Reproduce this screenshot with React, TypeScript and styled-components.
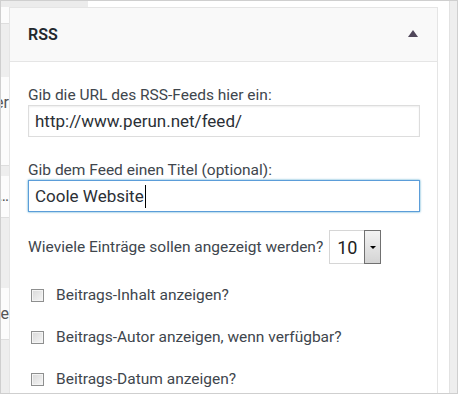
import styled, { createGlobalStyle } from "styled-components";

const GlobalStyle = createGlobalStyle`
  html, body {
    margin: 0;
    padding: 0;
    background: #ffffff;
  }

  body {
    font-family: Roboto, "Open Sans", sans-serif;
    color: #444;
  }
`;

const backdrop = [
  { height: 17, white: true, text: "", top: 0 },
  { height: 53, white: false, text: "", top: 0 },
  { height: 89, white: true, text: "er", top: 16 },
  { height: 10, white: false, text: "", top: 0 },
  { height: 42, white: true, text: "…", top: 10 },
  { height: 70, white: false, text: "", top: 0 },
  { height: 52, white: true, text: "e", top: 16 },
  { height: 60, white: false, text: "", top: 0 },
];

const options = [
  "Beitrags-Inhalt anzeigen?",
  "Beitrags-Autor anzeigen, wenn verfügbar?",
  "Beitrags-Datum anzeigen?",
];

function Checkbox() {
  return <Box />;
}

function App() {
  return (
    <>
      <GlobalStyle />
      <Frame>
        <TopStrip>
          <TopGray />
        </TopStrip>
        <RightRail />

        <LeftColumn>
          {backdrop.map((strip, i) => (
            <Strip key={i} $height={strip.height} $white={strip.white} $top={strip.top}>
              {strip.text}
            </Strip>
          ))}
        </LeftColumn>

        <Widget>
          <Header>
            <Title>RSS</Title>
            <Toggle />
          </Header>

          <Body>
            <Field $after={23}>
              <Label>Gib die URL des RSS-Feeds hier ein:</Label>
              <TextBox>http://www.perun.net/feed/</TextBox>
            </Field>

            <Field $after={18}>
              <Label>Gib dem Feed einen Titel (optional):</Label>
              <TextBox $focused>
                Coole Website
                <Caret />
              </TextBox>
            </Field>

            <CountRow>
              <Label>Wieviele Einträge sollen angezeigt werden?</Label>
              <Select>
                <SelectValue>10</SelectValue>
                <SelectButton />
              </Select>
            </CountRow>

            <Options>
              {options.map((text) => (
                <OptionRow key={text}>
                  <Checkbox />
                  <span>{text}</span>
                </OptionRow>
              ))}
            </Options>
          </Body>
        </Widget>

        <RightGap />
      </Frame>
    </>
  );
}

const Frame = styled.div`
  box-sizing: border-box;
  width: 458px;
  height: 394px;
  border: 1px solid #cfcfcf;
  overflow: hidden;

  display: grid;
  grid-template-columns: 8px 429px 11px 8px;
  grid-template-rows: 6px 1fr;

  background: #f1f1f1;
`;

const TopStrip = styled.div`
  grid-column: 1 / 4;
  grid-row: 1;

  display: flex;
  background: #ffffff;
`;

const TopGray = styled.div`
  width: 87px;
  background: #ececec;
`;

const RightRail = styled.div`
  grid-column: 4;
  grid-row: 1 / 3;

  background: #eeeeee;
  border-left: 1px solid #e2e2e2;
`;

const RightGap = styled.div`
  grid-column: 3;
  grid-row: 2;

  background: #ffffff;
`;

const LeftColumn = styled.div`
  grid-column: 1;
  grid-row: 2;

  display: flex;
  flex-direction: column;
  overflow: hidden;
`;

const Strip = styled.div<{ $height: number; $white: boolean; $top: number }>`
  flex: none;
  box-sizing: border-box;
  height: ${(p) => p.$height}px;
  padding-top: ${(p) => p.$top}px;

  display: flex;
  justify-content: flex-end;

  background: ${(p) => (p.$white ? "#fcfcfc" : "#eeeeee")};
  border-bottom: 1px solid ${(p) => (p.$white ? "#dedede" : "#eeeeee")};

  font-size: 16px;
  line-height: 20px;
  color: #555;
  white-space: nowrap;
`;

const Widget = styled.section`
  grid-column: 2;
  grid-row: 2;

  box-sizing: border-box;
  border: 1px solid #e5e5e5;
  border-bottom: none;
  background: #ffffff;
`;

const Header = styled.header`
  box-sizing: border-box;
  height: 54px;
  padding: 0 19px 0 18px;

  display: flex;
  align-items: center;
  justify-content: space-between;

  background: #f9f9f9;
  border-bottom: 1px solid #e5e5e5;
`;

const Title = styled.h3`
  margin: 0;

  font-size: 16px;
  font-weight: 600;
  color: #23282d;
`;

const Toggle = styled.span`
  width: 0;
  height: 0;
  margin-top: -2px;

  border-left: 5px solid transparent;
  border-right: 5px solid transparent;
  border-bottom: 7px solid #50475a;
`;

const Body = styled.div`
  padding: 23px 17px 0 18px;

  display: flex;
  flex-direction: column;
`;

const Field = styled.div<{ $after: number }>`
  display: flex;
  flex-direction: column;
  margin-bottom: ${(p) => p.$after}px;
`;

const Label = styled.label`
  font-size: 15.5px;
  line-height: 20px;
  color: #40464d;
`;

const TextBox = styled.div<{ $focused?: boolean }>`
  box-sizing: border-box;
  height: 32px;
  padding: 0 6px;

  display: flex;
  align-items: center;

  border: 1px solid ${(p) => (p.$focused ? "#5b9dd9" : "#dddddd")};
  box-shadow: ${(p) =>
    p.$focused
      ? "0 0 2px rgba(30, 140, 190, 0.8)"
      : "inset 0 1px 2px rgba(0, 0, 0, 0.07)"};
  background: #ffffff;

  font-size: 17px;
  color: #2b3036;
`;

const Caret = styled.span`
  width: 1px;
  height: 23px;
  margin-left: 1px;
  background: #000000;
`;

const CountRow = styled.div`
  display: flex;
  align-items: center;
  gap: 6px;
`;

const Select = styled.div`
  box-sizing: border-box;
  width: 52px;
  height: 34px;

  display: flex;

  border: 1px solid #d6d6d6;
  background: #ffffff;
`;

const SelectValue = styled.span`
  flex: 1;
  padding-left: 7px;

  display: flex;
  align-items: center;

  font-size: 18px;
  color: #222;
`;

const SelectButton = styled.span`
  box-sizing: border-box;
  width: 17px;
  margin: -1px -1px -1px 0;

  display: flex;
  align-items: center;
  justify-content: center;

  border: 1px solid #707070;
  background: linear-gradient(#f2f2f2, #d4d4d4);

  &::after {
    content: "";
    width: 0;
    height: 0;
    border-left: 3px solid transparent;
    border-right: 3px solid transparent;
    border-top: 3px solid #000000;
  }
`;

const Options = styled.div`
  margin-top: 21px;

  display: flex;
  flex-direction: column;
  gap: 22px;
`;

const OptionRow = styled.label`
  display: flex;
  align-items: center;
  gap: 12px;
  padding-left: 3px;

  font-size: 15.5px;
  line-height: 20px;
  color: #40464d;
`;

const Box = styled.span`
  box-sizing: border-box;
  width: 13px;
  height: 13px;

  border: 1px solid #8e8f8f;
  box-shadow: inset 0 0 0 1px #f4f4f4;
  background: linear-gradient(135deg, #d8d8d8, #f6f6f6);
`;

export default App;
